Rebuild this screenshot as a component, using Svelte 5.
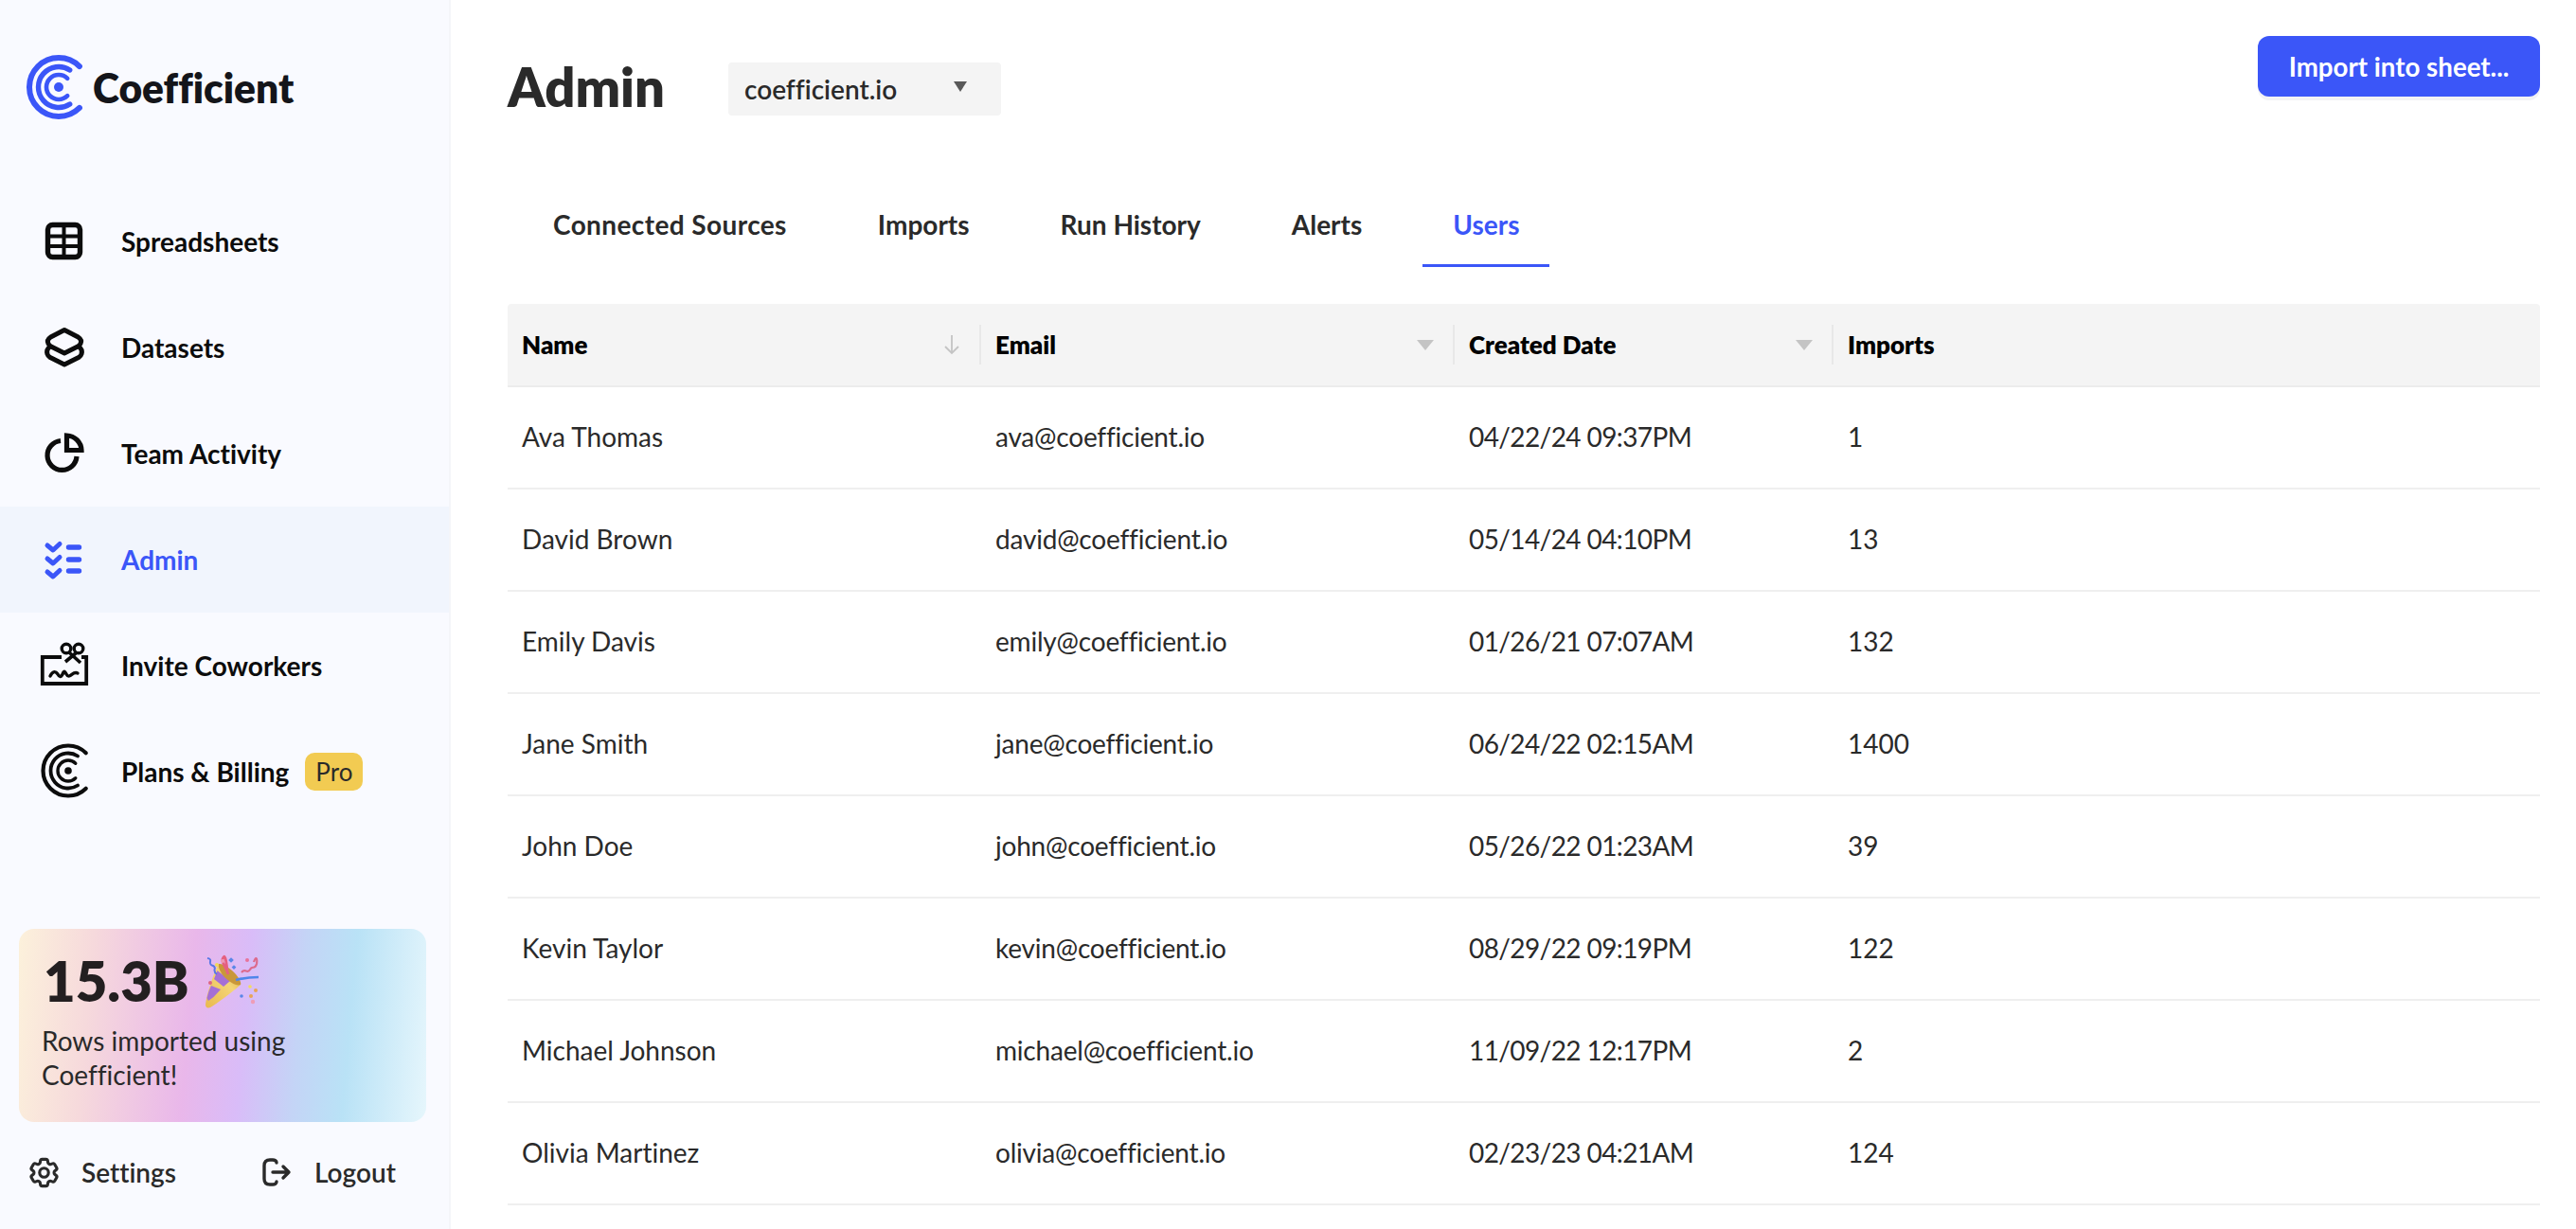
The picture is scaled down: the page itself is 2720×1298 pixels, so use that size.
<script>
	const navItems = [
		{ id: 'grid', label: 'Spreadsheets' },
		{ id: 'stack', label: 'Datasets' },
		{ id: 'pie', label: 'Team Activity' },
		{ id: 'list', label: 'Admin', active: true },
		{ id: 'gift', label: 'Invite Coworkers' },
		{ id: 'plans', label: 'Plans & Billing', badge: 'Pro' }
	];

	const tabs = ['Connected Sources', 'Imports', 'Run History', 'Alerts', 'Users'];

	const users = [
		['Ava Thomas', 'ava@coefficient.io', '04/22/24 09:37PM', '1'],
		['David Brown', 'david@coefficient.io', '05/14/24 04:10PM', '13'],
		['Emily Davis', 'emily@coefficient.io', '01/26/21 07:07AM', '132'],
		['Jane Smith', 'jane@coefficient.io', '06/24/22 02:15AM', '1400'],
		['John Doe', 'john@coefficient.io', '05/26/22 01:23AM', '39'],
		['Kevin Taylor', 'kevin@coefficient.io', '08/29/22 09:19PM', '122'],
		['Michael Johnson', 'michael@coefficient.io', '11/09/22 12:17PM', '2'],
		['Olivia Martinez', 'olivia@coefficient.io', '02/23/23 04:21AM', '124']
	];

	// open ring around the origin, gap facing right
	const ring = (r, deg) => {
		const a = (deg * Math.PI) / 180;
		const x = (r * Math.cos(a)).toFixed(2);
		const y = (r * Math.sin(a)).toFixed(2);
		return `M${x} ${-y}A${r} ${r} 0 1 0 ${x} ${y}`;
	};
</script>

<div class="page">
	<aside class="sidebar">
		<div class="brand">
			<svg class="logo" viewBox="-34 -35 64 70" fill="none" stroke="#3b56f8" stroke-linecap="round">
				<path d={ring(31, 45)} stroke-width="6" />
				<path d={ring(21.5, 57)} stroke-width="5.4" />
				<path d={ring(13, 45)} stroke-width="4.6" />
				<circle r="5" fill="#3b56f8" stroke="none" />
			</svg>
			<span class="wordmark">Coefficient</span>
		</div>

		<nav class="nav">
			{#each navItems as item}
				<div class="nav-item" class:active={item.active}>
					<svg class="nav-icon" viewBox="0 0 60 60" fill="none" stroke="currentColor">
						{#if item.id === 'grid'}
							<rect x="12.5" y="12.5" width="34" height="34" rx="5" stroke-width="5.4" />
							<path d="M29.5 12v35M12 24.5h35M12 35h35" stroke-width="4" />
						{:else if item.id === 'stack'}
							<g stroke-width="5" stroke-linejoin="round">
								<path d="M30 11.500 44.500 19Q49 22 47 26 46 28 44 29L30 36 16 29Q14 28 13 26 11 22 15.500 19Z" />
								<path d="M15 29Q10.500 32 12 37 12.500 39 15 40.500L30 48 45 40.500Q47.500 39 48 37 49.500 32 45 29" />
							</g>
						{:else if item.id === 'pie'}
							<path d="M26 16.500A15.500 15.500 0 1 0 43 33" stroke-width="5.200" />
							<path d="M32.500 11A16 16 0 0 1 48 26.500H32.500Z" stroke-width="5.200" />
						{:else if item.id === 'list'}
							<path d="M12 15l6 5 7-6.500M12 29l6 5 7-6.500M12 43l6 5 7-6.500" stroke-width="5" stroke-linecap="round" stroke-linejoin="round" />
							<path d="M34.500 17h11M34.500 30h11M34.500 42h11" stroke-width="5.400" stroke-linecap="round" />
						{:else if item.id === 'gift'}
							<path d="M27 21H6.800v28h46.400V21H48" stroke-width="3.800" />
							<circle cx="32" cy="12" r="4.800" stroke-width="3.400" />
							<circle cx="45" cy="12" r="4.800" stroke-width="3.400" />
							<path d="M35 16l12 11M43 16 31 26" stroke-width="3.600" />
							<path d="M15 41C18 35 21 36 23 39 25 43 27 42 29 37 31 34 32 42 35 41 38 40 40 36 44 38" stroke-width="3.400" stroke-linecap="round" />
						{:else}
							<g transform="translate(34 29)" stroke-linecap="round">
								<path d={ring(26.5, 45)} stroke-width="4.200" />
								<path d={ring(18.5, 57)} stroke-width="3.800" />
								<path d={ring(11, 45)} stroke-width="3.400" />
								<circle r="3.800" fill="currentColor" stroke="none" />
							</g>
						{/if}
					</svg>
					<span>{item.label}</span>
					{#if item.badge}<span class="badge">{item.badge}</span>{/if}
				</div>
			{/each}
		</nav>

		<div class="promo">
			<div class="promo-count">
				<span>15.3B</span>
				<svg class="popper" viewBox="22 16 64 58">
					<defs>
						<linearGradient id="cone" x1="0" y1="1" x2="1" y2="0">
							<stop offset="0" stop-color="#e9b94e" />
							<stop offset="0.6" stop-color="#f4d577" />
							<stop offset="1" stop-color="#d9a63c" />
						</linearGradient>
					</defs>
					<path d="M25 70C26 60 33 38 39 27L62 49C52 58 38 68 30 73 27 74 25 73 25 70Z" fill="url(#cone)" />
					<path d="M34 43 37.500 34 51 45 44 51ZM28.500 56 31 50 41 54 33.500 62 28 66 26.500 63Z" fill="#a56fd6" />
					<path d="M39 27C43 26 52 32 57 38 61 43 63 47 62 49 58 51 50 46 45 41 41 37 38 30 39 27Z" fill="#c9973a" />
					<path d="M48 35C47 22 45 15 43 22 42 26 47 31 49 38" fill="none" stroke="#e5607f" stroke-width="2.800" />
					<path d="M57 44Q68 41 81 41" fill="none" stroke="#4f86ea" stroke-width="2.600" />
					<path d="M27 21C34 22 26 27 33 29 38 31 31 34 37 38" fill="none" stroke="#5a78e6" stroke-width="2" />
					<path d="M63 36C67 31 69 38 72 33 74 28 77 34 79 27 80 20 78 19 76 25" fill="none" stroke="#dc6a8c" stroke-width="2.200" />
					<circle cx="37" cy="28" r="2" fill="#f0d95c" />
					<circle cx="43" cy="24" r="2" fill="#ef9ab5" />
					<rect x="50" y="21" width="4" height="4" transform="rotate(45 52 23)" fill="#5a86e8" />
					<rect x="53" y="29" width="3.400" height="3.400" transform="rotate(45 55 31)" fill="#5a86e8" />
					<circle cx="69" cy="23" r="2" fill="#e7739b" />
					<circle cx="30" cy="47" r="2" fill="#df6680" />
					<circle cx="72" cy="51" r="1.800" fill="#f3dd5d" />
					<circle cx="78" cy="55" r="2" fill="#e8a455" />
					<circle cx="73" cy="61" r="2" fill="#e8a455" />
					<circle cx="63" cy="61" r="1.800" fill="#5a86e8" />
					<circle cx="75" cy="67" r="2.200" fill="#ee9db7" />
				</svg>
			</div>
			<p>Rows imported using Coefficient!</p>
		</div>

		<div class="side-foot">
			<div class="foot-link settings">
				<svg viewBox="1.500 1.500 21 21" fill="none" stroke="currentColor" stroke-width="2" class="gear">
					<path d="M9.594 3.94c.09-.542.56-.94 1.11-.94h2.593c.55 0 1.02.398 1.11.94l.213 1.281c.063.374.313.686.645.87.074.04.147.083.22.127.324.196.72.257 1.075.124l1.217-.456a1.125 1.125 0 011.37.49l1.296 2.247a1.125 1.125 0 01-.26 1.431l-1.003.827c-.293.24-.438.613-.431.992a6.759 6.759 0 010 .255c-.007.378.138.75.43.99l1.005.828c.424.35.534.954.26 1.43l-1.298 2.247a1.125 1.125 0 01-1.369.491l-1.217-.456c-.355-.133-.75-.072-1.076.124a6.57 6.57 0 01-.22.128c-.331.183-.581.495-.644.869l-.213 1.28c-.09.543-.56.941-1.11.941h-2.594c-.55 0-1.02-.398-1.11-.94l-.213-1.281c-.062-.374-.312-.686-.644-.87a6.52 6.52 0 01-.22-.127c-.325-.196-.72-.257-1.076-.124l-1.217.456a1.125 1.125 0 01-1.369-.49l-1.297-2.247a1.125 1.125 0 01.26-1.431l1.004-.827c.292-.24.437-.613.43-.992a6.932 6.932 0 010-.255c.007-.378-.138-.75-.43-.99l-1.004-.828a1.125 1.125 0 01-.26-1.43l1.297-2.247a1.125 1.125 0 011.37-.491l1.216.456c.356.133.751.072 1.076-.124.072-.044.146-.087.22-.128.332-.183.582-.495.644-.869l.214-1.281z" />
					<circle cx="12" cy="12" r="3" />
				</svg>
				<span>Settings</span>
			</div>
			<div class="foot-link logout">
				<svg viewBox="0 0 32 30" fill="none" stroke="currentColor" stroke-width="3.400" stroke-linecap="round" stroke-linejoin="round" class="door">
					<path d="M16 5C16 3 14 2 12 2H9C5 2 3 4 3 8V22C3 26 5 28 9 28H12C14 28 16 27 16 25" />
					<path d="M12 15H29M23 9l6 6-6 6" />
				</svg>
				<span>Logout</span>
			</div>
		</div>
	</aside>

	<main class="main">
		<header class="topbar">
			<h1>Admin</h1>
			<div class="select">
				<span>coefficient.io</span>
				<i class="caret"></i>
			</div>
			<button class="import">Import into sheet...</button>
		</header>

		<div class="tabs">
			{#each tabs as tab}
				<div class="tab" class:current={tab === 'Users'}>{tab}</div>
			{/each}
		</div>

		<div class="table">
			<div class="row head">
				<div class="th">
					<span>Name</span>
					<svg class="sort" viewBox="0 0 18 22" fill="none" stroke="#c4c4c4" stroke-width="1.800"><path d="M9 1v19M2 13l7 7 7-7" /></svg>
				</div>
				<div class="th"><span>Email</span><i class="filter"></i></div>
				<div class="th"><span>Created Date</span><i class="filter"></i></div>
				<div class="th last"><span>Imports</span></div>
			</div>
			{#each users as user}
				<div class="row">
					{#each user as cell, i}
						<div class="td" class:email={i === 1} class:date={i === 2}>{cell}</div>
					{/each}
				</div>
			{/each}
		</div>
	</main>
</div>

<style>
	:global(body) {
		margin: 0;
		background: #fff;
		font-family: Lato, 'Liberation Sans', sans-serif;
		font-variant-ligatures: none;
		color: #2a2a2a;
	}

	.page {
		display: flex;
		width: 2720px;
		height: 1298px;
		overflow: hidden;
	}

	.sidebar {
		box-sizing: border-box;
		width: 476px;
		flex: none;
		display: flex;
		flex-direction: column;
		background: #f9faff;
		border-right: 2px solid #f4f5f9;
	}

	.brand {
		display: flex;
		align-items: center;
		gap: 6px;
		height: 70px;
		margin: 57px 0 0 28px;
	}

	.logo {
		width: 64px;
		height: 70px;
	}

	.wordmark {
		font-size: 42.5px;
		font-weight: 800;
		color: #14151a;
	}

	.nav {
		margin-top: 72px;
	}

	.nav-item {
		display: flex;
		align-items: center;
		height: 112px;
		padding-left: 38px;
		font-size: 28px;
		font-weight: 700;
		color: #0c0c0c;
	}

	.nav-item.active {
		background: #f1f5fd;
		color: #3b56f8;
	}

	.nav-icon {
		width: 60px;
		height: 60px;
		margin-right: 30px;
		flex: none;
	}

	.badge {
		display: flex;
		align-items: center;
		height: 40px;
		margin-left: 17px;
		padding: 0 11px;
		border-radius: 10px;
		background: #f2cb52;
		font-size: 26px;
		font-weight: 400;
		color: #2a2a2a;
	}

	.promo {
		box-sizing: border-box;
		width: 430px;
		height: 204px;
		margin: 110px 0 0 20px;
		padding: 22px 28px 0 24px;
		border-radius: 16px;
		background: linear-gradient(95deg, #fcf1db 0%, #f6d9dc 18%, #e9b7ea 42%, #d9bcf8 55%, #c4d4f6 68%, #b9e2f6 80%, #e6f6fc 100%);
	}

	.promo-count {
		display: flex;
		align-items: center;
		gap: 14px;
		padding-left: 2px;
		font-size: 58px;
		font-weight: 800;
		line-height: 66px;
		color: #231f20;
	}

	.popper {
		width: 64px;
		height: 58px;
	}

	.promo p {
		margin: 12px 0 0;
		font-size: 28px;
		line-height: 36px;
		color: #2a2a2a;
	}

	.side-foot {
		display: flex;
		margin-top: 36px;
		font-size: 28px;
		font-weight: 600;
		color: #2a2a2a;
	}

	.foot-link {
		display: flex;
		align-items: center;
	}

	.settings {
		width: 246px;
		padding-left: 30px;
		gap: 23px;
	}

	.gear {
		width: 33px;
		height: 33px;
	}

	.logout {
		gap: 24px;
	}

	.door {
		width: 32px;
		height: 30px;
	}

	.main {
		flex: 1;
		min-width: 0;
		padding: 38px 38px 0 60px;
	}

	.topbar {
		display: flex;
		align-items: flex-start;
	}

	h1 {
		margin: 22px 0 0;
		width: 233px;
		font-size: 56px;
		line-height: 64px;
		font-weight: 800;
		color: #2a2a2a;
	}

	.select {
		box-sizing: border-box;
		display: flex;
		align-items: center;
		justify-content: space-between;
		width: 288px;
		height: 56px;
		margin-top: 28px;
		padding: 0 36px 0 17px;
		border-radius: 4px;
		background: #f4f4f4;
		font-size: 28px;
		font-weight: 600;
	}

	.caret {
		width: 0;
		height: 0;
		margin-top: -6px;
		border-left: 7px solid transparent;
		border-right: 7px solid transparent;
		border-top: 11px solid #595959;
	}

	.import {
		width: 298px;
		height: 64px;
		margin-left: auto;
		border: 0;
		border-radius: 12px;
		background: #3b56f8;
		box-shadow: 0 4px 0 #f3f3f5;
		font: 700 27.7px Lato, 'Liberation Sans', sans-serif;
		color: #fff;
	}

	.tabs {
		display: flex;
		gap: 32px;
		margin-top: 69px;
		padding-left: 16px;
	}

	.tab {
		padding: 26px 32px 0;
		height: 89px;
		box-sizing: border-box;
		font-size: 28px;
		font-weight: 700;
		line-height: 36px;
	}

	.tab:first-child {
		letter-spacing: 0.4px;
	}

	.tab.current {
		color: #3b56f8;
		border-bottom: 3px solid #3b56f8;
	}

	.table {
		margin-top: 39px;
	}

	.row {
		box-sizing: border-box;
		display: grid;
		grid-template-columns: 500px 500px 400px 1fr;
		height: 108px;
		border-bottom: 2px solid #efefef;
	}

	.row.head {
		height: 88px;
		align-items: center;
		background: #f4f4f4;
		border-radius: 4px 4px 0 0;
		border-bottom-color: #ececec;
	}

	.th {
		box-sizing: border-box;
		display: flex;
		align-items: center;
		justify-content: space-between;
		height: 42px;
		padding: 0 20px 0 15px;
		border-right: 2px solid #e8e8e8;
		font-size: 26px;
		font-weight: 800;
		color: #000;
	}

	.th.last {
		border-right: 0;
	}

	.sort {
		width: 18px;
		height: 22px;
	}

	.filter {
		width: 0;
		height: 0;
		border-left: 9px solid transparent;
		border-right: 9px solid transparent;
		border-top: 11px solid #c4c4c4;
	}

	.td {
		display: flex;
		align-items: center;
		padding: 0 0 2px 15px;
		font-size: 28px;
		color: #2a2a2a;
	}

	.td.email {
		letter-spacing: -0.2px;
	}

	.td.date {
		letter-spacing: -0.6px;
	}
</style>
